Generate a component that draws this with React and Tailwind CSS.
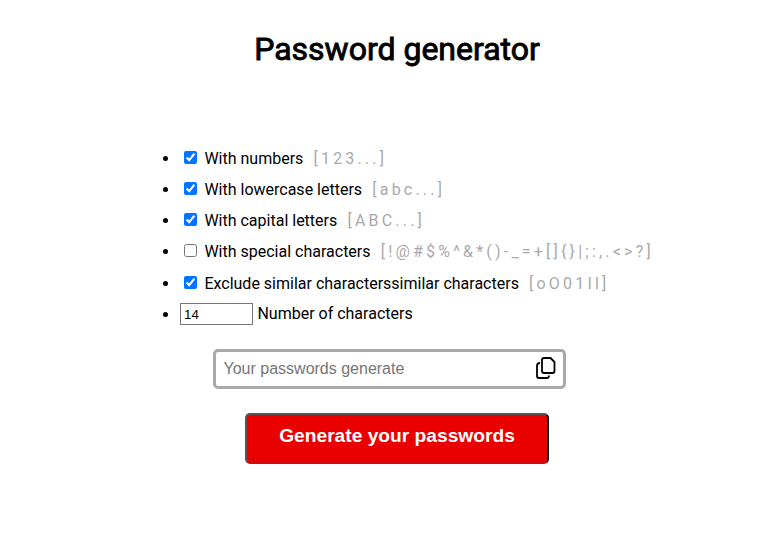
const rows = [
  { label: 'With numbers', hint: '[123...]', on: true, h: 'h-[31px]' },
  { label: 'With lowercase letters', hint: '[abc...]', on: true, h: 'h-[31px]' },
  { label: 'With capital letters', hint: '[ABC...]', on: true, h: 'h-[31px]' },
  { label: 'With special characters', hint: '[!@#$%^&*()-_=+[]{}|;:,.<>?]', on: false, h: 'h-[31px]' },
  { label: 'Exclude similar characterssimilar characters', hint: '[oO01Il]', on: true, h: 'h-[32px] pt-px' },
];

export default function App() {
  return (
    <main className="flex h-[557px] w-[783px] flex-col items-center overflow-hidden bg-white pl-[11px] font-['Roboto',sans-serif] text-base text-black">
      <h1 className="mt-[30px] text-[32px] leading-[38px] font-normal [-webkit-text-stroke:0.9px_black]">Password generator</h1>
      <ul className="mt-[75px] w-full pl-[169px]">
        {rows.map((r) => (
          <li key={r.label} className={`flex items-center whitespace-nowrap ${r.h}`}>
            <span className="-ml-[17px] mr-[14px] size-[5px] rounded-full bg-black" />
            <input type="checkbox" defaultChecked={r.on} className="-mt-0.5 ml-[2px] mr-[7.4px] size-[13px]" />
            <span>{r.label}</span>
            <span className="ml-[10.2px] tracking-[3.2px] text-[#a9a9a9]">{r.hint}</span>
          </li>
        ))}
        <li className="flex h-[30px] items-center">
          <span className="-ml-[17px] mr-[12px] size-[5px] rounded-full bg-black" />
          <input defaultValue="14" className="mr-[4.4px] h-[22px] w-[73px] border border-[#767676] px-[3px] font-['Liberation_Sans',sans-serif] text-[13.333px]" />
          <span>Number of characters</span>
        </li>
      </ul>
      <div className="mt-[20px] mr-4 flex h-[40px] w-[353px] items-center justify-between rounded-[5px] border-[3px] border-[#a9a9a9] pr-[7px] pl-2">
        <span className="font-['Liberation_Sans',sans-serif] text-[#757575]">Your passwords generate</span>
        <svg className="-mt-[3px]" width="20" height="22" viewBox="0 0 20 22" fill="none" stroke="black" strokeWidth="1.8" strokeLinejoin="round">
          <path d="M8 1H14.5L18.5 5V14Q18.5 16 16.5 16H8Q6 16 6 14V3Q6 1 8 1Z" />
          <path d="M4 6Q1 6 1 8.5V19Q1 21 3 21H11Q13 21 13 18.5" />
        </svg>
      </div>
      <button className="mt-[24px] h-[51px] w-[304px] rounded-[5px] border-2 border-t-[#555] border-r-black border-b-[#d90909] border-l-[#555] bg-[#eb0000] pb-[4px] font-['Liberation_Sans',sans-serif] text-[19.2px] font-bold text-white shadow-[inset_0_-3px_0_#d90909]">Generate your passwords</button>
    </main>
  );
}
